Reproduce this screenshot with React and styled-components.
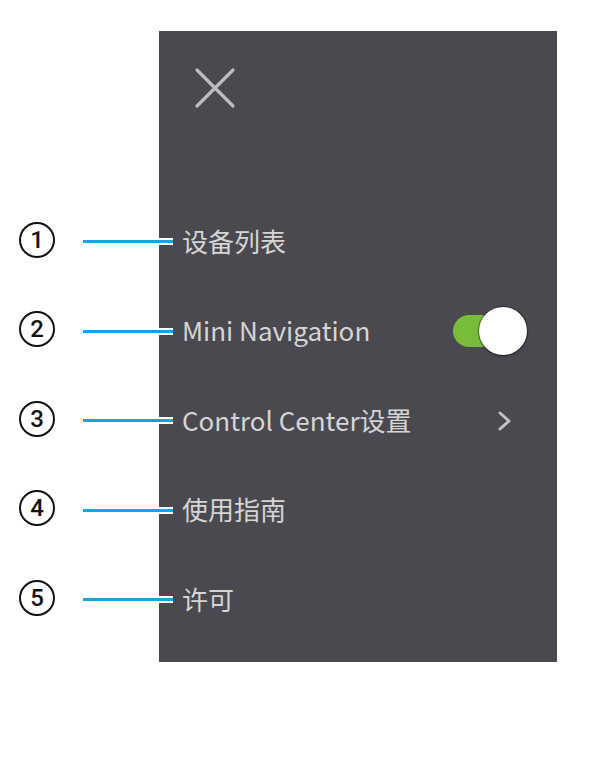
import React from "react";
import styled, { createGlobalStyle } from "styled-components";

const GlobalStyle = createGlobalStyle`
  html, body {
    margin: 0;
    padding: 0;
    background: #ffffff;
  }
`;

const Frame = styled.div`
  display: flex;
  align-items: flex-start;
  padding-top: 31px;
  width: 609px;
  height: 764px;
  box-sizing: border-box;
`;

const Notes = styled.div`
  width: 159px;
  flex-shrink: 0;
  padding-top: 166px;
  display: flex;
  flex-direction: column;
  position: relative;
  z-index: 2;
`;

const NoteRow = styled.div`
  height: 89.5px;
  display: flex;
  align-items: center;
  padding-left: 19px;
`;

const Circled = styled.div`
  width: 36px;
  height: 36px;
  box-sizing: border-box;
  border: 2px solid #111;
  border-radius: 50%;
  display: flex;
  align-items: center;
  justify-content: center;
  font-family: Roboto, "Liberation Sans", Arial, sans-serif;
  font-size: 24px;
  font-weight: 500;
  line-height: 1;
  color: #111;
  margin-top: -4px;
`;

const Leader = styled.div`
  margin-left: 28px;
  flex: 1;
  height: 3px;
  background: #12a3e8;
`;

const LeaderTip = styled.div`
  width: 14px;
  height: 7px;
  margin-right: -14px;
  background: linear-gradient(
    #ffffff 0 2px,
    #12a3e8 2px 5px,
    #ffffff 5px 7px
  );
`;

const Panel = styled.div`
  width: 398px;
  height: 631px;
  background: #4a494f;
  box-sizing: border-box;
  padding: 0 30px 0 23px;
  display: flex;
  flex-direction: column;
  font-family: "Noto Sans CJK SC", "Noto Sans", sans-serif;
`;

const Header = styled.div`
  height: 166px;
  padding: 36px 0 0 12px;
  box-sizing: border-box;
`;

const CloseButton = styled.div`
  width: 42px;
  height: 42px;
  cursor: pointer;
`;

const Item = styled.div`
  height: 89.5px;
  display: flex;
  align-items: center;
  justify-content: space-between;
  color: #d5d5d5;
  font-size: 26px;
  line-height: 1;
`;

const Label = styled.span`
  margin-top: -2px;
`;

const Switch = styled.div`
  position: relative;
  width: 62px;
  height: 32px;
  margin-right: 12px;
  border-radius: 16px;
  background: ${(p) => (p.on ? "#77bd3a" : "#8a898e")};
`;

const Knob = styled.div`
  position: absolute;
  top: -8px;
  left: ${(p) => (p.on ? "26px" : "-8px")};
  width: 48px;
  height: 48px;
  border-radius: 50%;
  background: #ffffff;
  box-shadow: 0 0 0 1px rgba(0, 0, 0, 0.35), 0 1px 3px rgba(0, 0, 0, 0.4);
`;

const Chevron = styled.svg`
  width: 16px;
  height: 24px;
  margin-right: 14px;
`;

const items = [
  { label: "设备列表" },
  { label: "Mini Navigation", toggle: true },
  { label: "Control Center设置", more: true },
  { label: "使用指南" },
  { label: "许可" },
];

const App = () => {
  return (
    <>
      <GlobalStyle />
      <Frame>
        <Notes>
          {items.map((item, i) => (
            <NoteRow key={i}>
              <Circled>{i + 1}</Circled>
              <Leader />
              <LeaderTip />
            </NoteRow>
          ))}
        </Notes>
        <Panel>
          <Header>
            <CloseButton>
              <svg width="42" height="42" viewBox="0 0 42 42">
                <path
                  d="M3 3 L39 39 M39 3 L3 39"
                  stroke="#bdbdbd"
                  strokeWidth="3.2"
                  strokeLinecap="round"
                />
              </svg>
            </CloseButton>
          </Header>
          {items.map((item, i) => (
            <Item key={i}>
              <Label>{item.label}</Label>
              {item.toggle && (
                <Switch on>
                  <Knob on />
                </Switch>
              )}
              {item.more && (
                <Chevron viewBox="0 0 16 24">
                  <path
                    d="M3 4 L12 12 L3 20"
                    fill="none"
                    stroke="#c4c4c4"
                    strokeWidth="3"
                    strokeLinecap="round"
                    strokeLinejoin="round"
                  />
                </Chevron>
              )}
            </Item>
          ))}
        </Panel>
      </Frame>
    </>
  );
};

export default App;
